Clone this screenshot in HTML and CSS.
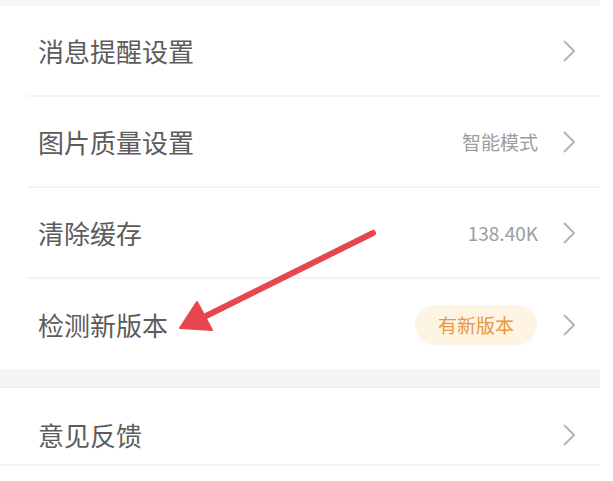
FILE: index.html
```html
<!DOCTYPE html>
<html lang="zh-CN">
<head>
<meta charset="utf-8">
<title>设置</title>
<link rel="stylesheet" href="styles.css">
</head>
<body>
<div class="page">
  <div class="topband"></div>
  <div class="group">
    <div class="row">
      <span class="label">消息提醒设置</span>
      <span class="right">
        <svg class="chev" viewBox="0 0 12 22" width="12" height="22"><polyline points="1,1 11,11 1,21"/></svg>
      </span>
    </div>
    <div class="row">
      <span class="label">图片质量设置</span>
      <span class="right">
        <span class="value">智能模式</span>
        <svg class="chev" viewBox="0 0 12 22" width="12" height="22"><polyline points="1,1 11,11 1,21"/></svg>
      </span>
    </div>
    <div class="row">
      <span class="label">清除缓存</span>
      <span class="right">
        <span class="value">138.40K</span>
        <svg class="chev" viewBox="0 0 12 22" width="12" height="22"><polyline points="1,1 11,11 1,21"/></svg>
      </span>
    </div>
    <div class="row row-last">
      <span class="label">检测新版本</span>
      <span class="right">
        <span class="badge">有新版本</span>
        <svg class="chev" viewBox="0 0 12 22" width="12" height="22"><polyline points="1,1 11,11 1,21"/></svg>
      </span>
    </div>
  </div>
  <div class="gap"></div>
  <div class="group">
    <div class="row row-final">
      <span class="label">意见反馈</span>
      <span class="right">
        <svg class="chev" viewBox="0 0 12 22" width="12" height="22"><polyline points="1,1 11,11 1,21"/></svg>
      </span>
    </div>
  </div>
  <svg class="arrow" viewBox="0 0 600 481" width="600" height="481">
    <line x1="373" y1="233" x2="204" y2="317"/>
    <polygon points="180,328 197,302 212,330"/>
  </svg>
</div>
</body>
</html>
```

FILE: styles.css
```css
html, body {
  margin: 0;
  padding: 0;
  background: #ffffff;
}

.page {
  position: relative;
  width: 600px;
  height: 481px;
  font-family: "Noto Sans CJK SC", "Noto Sans", sans-serif;
  background: #ffffff;
}

.topband {
  height: 6px;
  background: #f6f6f6;
}

.group {
  display: flex;
  flex-direction: column;
}

.row {
  display: flex;
  align-items: center;
  justify-content: space-between;
  height: 89px;
  margin-left: 28px;
  padding-left: 10px;
  padding-right: 25px;
  border-bottom: 2px solid #f4f4f4;
}

.row-last {
  border-bottom: none;
  height: 91px;
}

.row-final {
  margin-left: 0;
  padding-left: 38px;
  height: 58px;
  padding-top: 18px;
  border-bottom: 2px solid #f3f3f3;
}

.label {
  font-size: 26px;
  color: #5c5c5c;
  line-height: 1;
}

.right {
  display: flex;
  align-items: center;
}

.value {
  font-size: 19px;
  color: #9c9c9c;
  margin-right: 25px;
  line-height: 1;
}

.badge {
  display: flex;
  align-items: center;
  justify-content: center;
  width: 122px;
  height: 40px;
  border-radius: 20px;
  background: #fdf4e4;
  color: #e8993a;
  font-size: 19px;
  margin-right: 26px;
}

.chev polyline {
  fill: none;
  stroke: #b4b4b4;
  stroke-width: 2;
}

.gap {
  height: 16px;
  background: #f5f5f5;
  border-top: 1px solid #ededed;
  border-bottom: 1px solid #ededed;
}

.arrow {
  position: absolute;
  left: 0;
  top: 0;
  pointer-events: none;
}

.arrow line {
  stroke: #e8464f;
  stroke-width: 6;
  stroke-linecap: round;
}

.arrow polygon {
  fill: #e8464f;
  stroke: #e8464f;
  stroke-width: 2;
  stroke-linejoin: round;
}
```
